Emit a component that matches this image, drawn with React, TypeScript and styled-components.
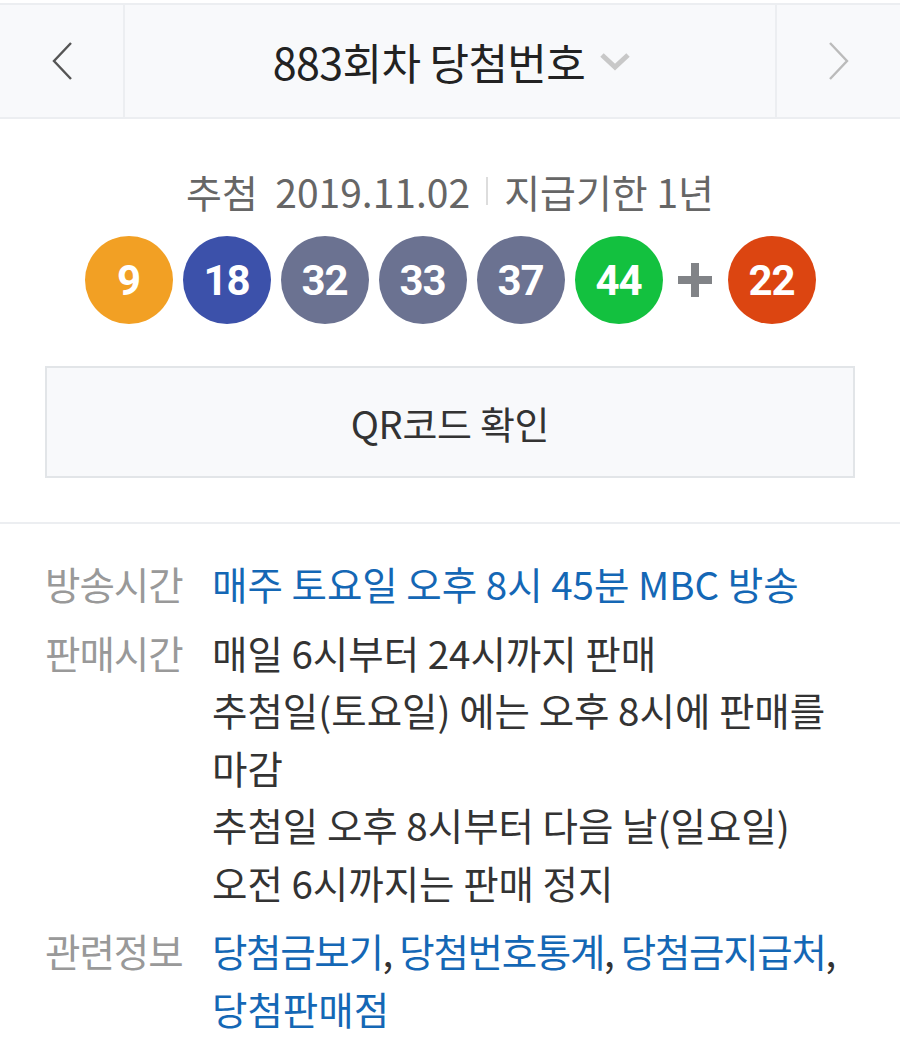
import React from "react";
import styled, { createGlobalStyle } from "styled-components";

const Global = createGlobalStyle`
  html, body { margin: 0; padding: 0; background: #ffffff; }
  body { font-family: "Noto Sans CJK KR", "Noto Sans", Roboto, sans-serif; -webkit-font-smoothing: antialiased; }
`;

const Page = styled.div`
  width: 900px;
  padding-top: 3px;
`;

const Header = styled.div`
  display: grid;
  grid-template-columns: 125px 1fr 125px;
  height: 112px;
  background: #f8f9fb;
  border-top: 2px solid #eceef1;
  border-bottom: 2px solid #eceef1;
`;

const NavButton = styled.div<{ $side: "left" | "right" }>`
  display: flex;
  align-items: center;
  justify-content: center;
  ${(p) => (p.$side === "left" ? "border-right: 2px solid #eceef1;" : "border-left: 2px solid #eceef1;")}
`;

const Title = styled.div`
  display: flex;
  align-items: center;
  justify-content: center;
  gap: 14px;
  font-size: 43px;
  color: #222;
  letter-spacing: -0.6px;
  padding-left: 4px;
`;

const Summary = styled.section`
  display: flex;
  flex-direction: column;
  align-items: center;
  padding: 46px 45px 44px;
  border-bottom: 2px solid #eceef1;
`;

const DrawInfo = styled.div`
  display: flex;
  align-items: center;
  gap: 16px;
  font-size: 39px;
  color: #666;
  line-height: 52px;
  letter-spacing: 0;
`;

const Sep = styled.span`
  width: 2px;
  height: 28px;
  background: #dddddd;
`;

const Balls = styled.div`
  display: flex;
  align-items: center;
  gap: 10px;
  margin-top: 19px;
`;

const Ball = styled.div<{ $color: string }>`
  width: 88px;
  height: 88px;
  border-radius: 50%;
  background: ${(p) => p.$color};
  color: #fff;
  display: flex;
  align-items: center;
  justify-content: center;
  font-family: Roboto, "Noto Sans", sans-serif;
  font-weight: 700;
  font-size: 42px;
  letter-spacing: -1px;
`;

const Plus = styled.div`
  width: 45px;
  display: flex;
  justify-content: center;
`;

const QrButton = styled.button`
  margin-top: 42px;
  align-self: stretch;
  height: 112px;
  background: #f8f9fb;
  border: 2px solid #e2e5e8;
  font-family: inherit;
  font-size: 38px;
  color: #333;
  letter-spacing: -0.3px;
  cursor: pointer;
`;

const InfoList = styled.dl`
  margin: 0;
  padding: 31px 45px 0;
  display: grid;
  grid-template-columns: 167px 1fr;
  row-gap: 11px;
  font-size: 38.5px;
  line-height: 57.5px;
  letter-spacing: 0;
`;

const Label = styled.dt`
  color: #999;
  margin: 0;
  letter-spacing: -1px;
`;

const Value = styled.dd<{ $link?: boolean }>`
  margin: 0;
  color: ${(p) => (p.$link ? "#1467b5" : "#333")};
`;

const Link = styled.a`
  color: #1467b5;
  text-decoration: none;
`;

const Comma = styled.span`
  color: #333;
`;

const Line = styled.div<{ $tight?: boolean }>`
  white-space: nowrap;
  letter-spacing: ${(p) => (p.$tight ? "-1.3px" : "0")};
`;

const balls: { n: number; c: string }[] = [
  { n: 9, c: "#f2a024" },
  { n: 18, c: "#3c51aa" },
  { n: 32, c: "#6b7291" },
  { n: 33, c: "#6b7291" },
  { n: 37, c: "#6b7291" },
  { n: 44, c: "#13c13f" },
];

export default function App() {
  return (
    <Page>
      <Global />
      <Header>
        <NavButton $side="left">
          <svg width="22" height="40" viewBox="0 0 22 40">
            <polyline points="20,2 3,20 20,38" fill="none" stroke="#555" strokeWidth="2.4" />
          </svg>
        </NavButton>
        <Title>
          883회차 당첨번호
          <svg width="32" height="20" viewBox="0 0 32 20">
            <polyline points="3,4 16,16 29,4" fill="none" stroke="#c8c8c8" strokeWidth="5" />
          </svg>
        </Title>
        <NavButton $side="right">
          <svg width="22" height="40" viewBox="0 0 22 40">
            <polyline points="2,2 19,20 2,38" fill="none" stroke="#bbbbbb" strokeWidth="2.4" />
          </svg>
        </NavButton>
      </Header>

      <Summary>
        <DrawInfo>
          <span>추첨&nbsp; 2019.11.02</span>
          <Sep />
          <span>지급기한 1년</span>
        </DrawInfo>
        <Balls>
          {balls.map((b) => (
            <Ball key={b.n} $color={b.c}>
              {b.n}
            </Ball>
          ))}
          <Plus>
            <svg width="34" height="34" viewBox="0 0 34 34">
              <rect x="13" y="0" width="8" height="34" fill="#818387" />
              <rect x="0" y="13" width="34" height="8" fill="#818387" />
            </svg>
          </Plus>
          <Ball $color="#dc4511">22</Ball>
        </Balls>
        <QrButton>QR코드 확인</QrButton>
      </Summary>

      <InfoList>
        <Label>방송시간</Label>
        <Value $link>
          <Line>매주 토요일 오후 8시 45분 MBC 방송</Line>
        </Value>
        <Label>판매시간</Label>
        <Value>
          <Line>매일 6시부터 24시까지 판매</Line>
          <Line>추첨일(토요일) 에는 오후 8시에 판매를</Line>
          <Line>마감</Line>
          <Line>추첨일 오후 8시부터 다음 날(일요일)</Line>
          <Line>오전 6시까지는 판매 정지</Line>
        </Value>
        <Label>관련정보</Label>
        <Value>
          <Line $tight>
            <Link href="#">당첨금보기</Link>
            <Comma>, </Comma>
            <Link href="#">당첨번호통계</Link>
            <Comma>, </Comma>
            <Link href="#">당첨금지급처</Link>
            <Comma>,</Comma>
          </Line>
          <Line>
            <Link href="#">당첨판매점</Link>
          </Line>
        </Value>
      </InfoList>
    </Page>
  );
}
